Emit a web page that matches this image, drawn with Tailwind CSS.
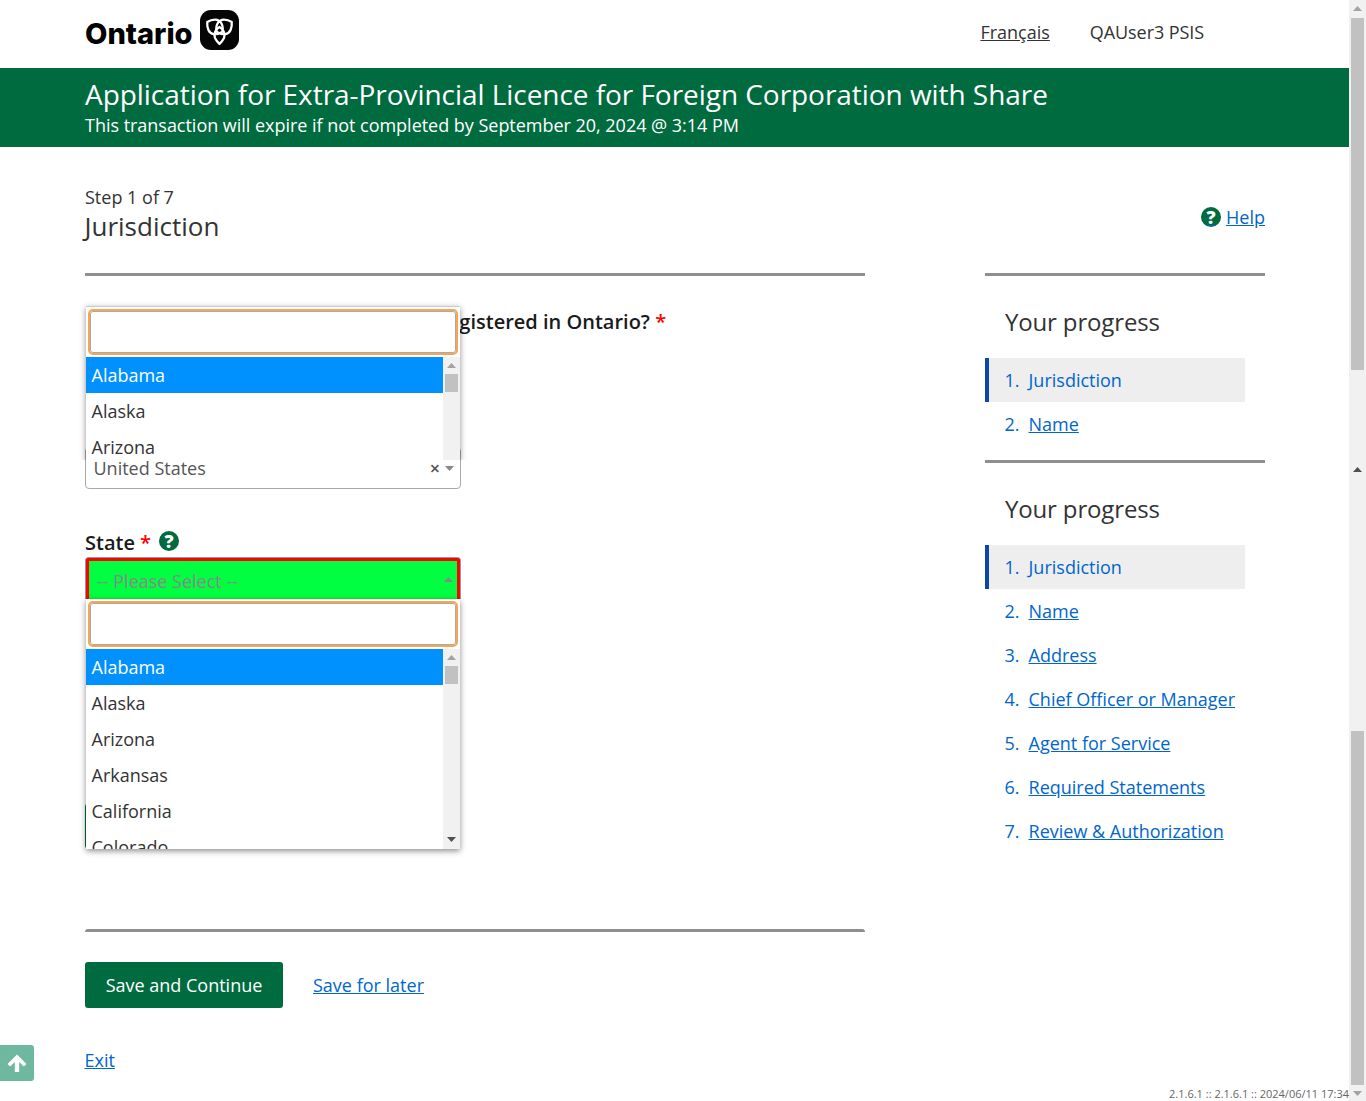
<!DOCTYPE html>
<html lang="en">
<head>
    <meta charset="UTF-8">
    <title>Application for Extra-Provincial Licence</title>
    <script src="https://cdn.jsdelivr.net/npm/@tailwindcss/browser@4"></script>
</head>
<body class="bg-white font-['Open_Sans',sans-serif] text-[18px] text-[#1a1a1a]">
<div class="flex h-[1101px] overflow-hidden relative">
    <div class="w-[1349px] shrink-0">
        <!-- Header -->
        <header class="h-[68px] flex items-center justify-between pl-[85px] pr-[145px]">
            <div class="flex items-center gap-[7px]">
                <span class="font-['Inter',sans-serif] font-extrabold text-[29px] text-black leading-none mt-[-1px]">Ontario</span>
                <svg class="w-[39px] h-[40px] mt-[-8px]" viewBox="0 0 39 40">
                    <rect width="39" height="40" rx="11" fill="#050505"/>
                    <g fill="none" stroke="#fff" stroke-width="2.3" stroke-linejoin="round">
                        <path transform="translate(20 20) rotate(-58)" d="M0 3C-7 0-9-6-6-10C-4-13-2-14 0-15C2-14 4-13 6-10C9-6 7 0 0 3Z"/>
                        <path transform="translate(19 20) rotate(58)" d="M0 3C-7 0-9-6-6-10C-4-13-2-14 0-15C2-14 4-13 6-10C9-6 7 0 0 3Z"/>
                        <path transform="translate(19.5 19) rotate(180)" d="M0 2C-4 0-6-5-4.5-9C-3-12-1-14 0-15C1-14 3-12 4.5-9C6-5 4 0 0 2Z"/>
                    </g>
                </svg>
            </div>
            <nav class="flex items-center gap-[40px] pb-[4px] text-[#333]">
                <a href="#" class="underline">Français</a>
                <span class="tracking-[-0.08px]">QAUser3 PSIS</span>
            </nav>
        </header>

        <!-- Title band -->
        <div class="h-[79px] bg-[#006b3f] text-white pl-[85px] pt-[8px]">
            <h1 class="text-[28px] leading-[36px] tracking-[-0.05px]">Application for Extra-Provincial Licence for Foreign Corporation with Share</h1>
            <p class="text-[18px] leading-[24px] mt-px tracking-[-0.025px]">This transaction will expire if not completed by September 20, 2024 @ 3:14 PM</p>
        </div>

        <main class="px-[85px]">
            <div class="flex justify-between items-center w-[1180px] pt-[38px]">
                <div>
                    <p class="leading-[24px] text-[#333]">Step 1 of 7</p>
                    <h2 class="text-[26px] leading-[34px] mb-[2px] ml-[-0.5px] text-[#333]">Jurisdiction</h2>
                </div>
                <a href="#" class="flex items-center gap-[5px] mt-[4px] text-[#0066cc] underline leading-[24px]">
                    <span class="inline-block w-[20px] h-[20px] rounded-full bg-[#006b3f] text-white text-[18px] font-extrabold leading-[20px] text-center">?</span>
                    Help
                </a>
            </div>

            <div class="flex justify-between w-[1180px] mt-[28px]">
                <!-- Form column -->
                <div class="w-[780px] relative">
                    <div class="h-[3px] bg-[#8f8f8f]"></div>
                    <label class="block mt-[32px] ml-[7px] text-[20px] leading-[28px] font-semibold text-[#1a1a1a] whitespace-nowrap">What jurisdiction is the corporation registered in Ontario? <span class="text-[#ff0000]">*</span></label>

                    <div class="mt-[111px] w-[376px] h-[42px] border border-[#aaa] rounded-[4px] bg-white flex items-center justify-between pl-[7.5px] pr-[5px] text-[#555]">
                        <span>United States</span>
                        <span class="flex items-center gap-[5px]">
                            <span class="text-[18px] font-semibold leading-none">×</span>
                            <svg class="w-[10px] h-[5px]" viewBox="0 0 10 5"><path d="M0 0h9L4.5 5z" fill="#888"/></svg>
                        </span>
                    </div>

                    <label class="flex items-center mt-[40px] text-[20px] leading-[28px] font-semibold">
                        State <span class="text-[#ff0000] ml-[5px]">*</span>
                        <span class="ml-[8px] mt-[-4px] w-[20px] h-[20px] rounded-full bg-[#006b3f] text-white text-[18px] font-extrabold leading-[20px] text-center">?</span>
                    </label>
                    <div class="w-[376px] h-[42px] border-x border-t border-[#999] rounded-t-[4px] overflow-hidden">
                        <div class="h-full border-x-[3px] border-t-[3px] border-[#ff0000] bg-[#00ff41] flex items-center justify-between pl-[8px] pr-[3px] text-[#888]">
                            <span class="mt-[3px]">-- Please Select --</span>
                            <svg class="w-[10px] h-[5px] mb-[2px]" viewBox="0 0 10 5"><path d="M0 5h9L4.5 0z" fill="#888"/></svg>
                        </div>
                    </div>

                    <!-- Underneath the open list -->
                    <div class="mt-[204px] h-[46px] w-[120px] bg-[#006b3f] rounded-l-[4px]"></div>
                    <div class="h-[3px] mt-[80px] bg-[#8f8f8f] rounded-t-[3px]"></div>

                    <div class="flex items-center gap-[30px] mt-[30px]">
                        <button class="w-[198px] h-[46px] bg-[#006b3f] text-white font-medium rounded-[3px]">Save and Continue</button>
                        <a href="#" class="text-[#0066cc] underline">Save for later</a>
                    </div>
                    <a href="#" class="block mt-[40px] leading-[24px] ml-[-0.5px] text-[#0066cc] underline">Exit</a>

                    <!-- Open list, jurisdiction -->
                    <div class="absolute left-px top-[33px] w-[374px] h-[154px] bg-white border-t border-[#ccc] shadow-[0_2px_6px_rgba(0,0,0,0.45)] [clip-path:inset(-10px_-10px_0_-10px)]">
                        <div class="mx-[2px] mt-[2px] h-[46px] rounded-[5px] border-2 border-[#f7a64f] bg-white">
                            <div class="h-full border border-[#aaa] rounded-[3px]"></div>
                        </div>
                        <div class="flex h-[103px] mt-[2px] overflow-hidden">
                            <ul class="flex-1 text-[#333]">
                                <li class="h-[36px] leading-[36px] pl-[5.5px] bg-[#0091ff] text-white">Alabama</li>
                                <li class="h-[36px] leading-[36px] pl-[5.5px]">Alaska</li>
                                <li class="h-[36px] leading-[36px] pl-[5.5px]">Arizona</li>
                            </ul>
                            <div class="w-[17px] bg-[#f1f1f1] px-[2px] pt-[6px]">
                                <svg class="w-[9px] h-[5px] mx-auto" viewBox="0 0 9 5"><path d="M0 5h9L4.5 0z" fill="#a3a3a3"/></svg>
                                <div class="h-[18px] mt-[6px] bg-[#c1c1c1]"></div>
                            </div>
                        </div>
                    </div>

                    <!-- Open list, state -->
                    <div class="absolute left-px top-[326px] w-[374px] h-[250px] bg-white shadow-[0_2px_6px_rgba(0,0,0,0.45)]">
                        <div class="mx-[2px] mt-[2px] h-[46px] rounded-[5px] border-2 border-[#f7a64f] bg-white">
                            <div class="h-full border border-[#aaa] rounded-[3px]"></div>
                        </div>
                        <div class="flex h-[200px] mt-[2px] overflow-hidden">
                            <ul class="flex-1 text-[#333]">
                                <li class="h-[36px] leading-[36px] pl-[5.5px] bg-[#0091ff] text-white">Alabama</li>
                                <li class="h-[36px] leading-[36px] pl-[5.5px]">Alaska</li>
                                <li class="h-[36px] leading-[36px] pl-[5.5px]">Arizona</li>
                                <li class="h-[36px] leading-[36px] pl-[5.5px]">Arkansas</li>
                                <li class="h-[36px] leading-[36px] pl-[5.5px]">California</li>
                                <li class="h-[36px] leading-[36px] pl-[5.5px]">Colorado</li>
                            </ul>
                            <div class="w-[17px] bg-[#f1f1f1] px-[2px] pt-[6px] relative">
                                <svg class="w-[9px] h-[5px] mx-auto" viewBox="0 0 9 5"><path d="M0 5h9L4.5 0z" fill="#a3a3a3"/></svg>
                                <div class="h-[18px] mt-[6px] bg-[#c1c1c1]"></div>
                                <svg class="absolute bottom-[7px] left-[4px] w-[9px] h-[5px]" viewBox="0 0 9 5"><path d="M0 0h9L4.5 5z" fill="#505050"/></svg>
                            </div>
                        </div>
                    </div>
                </div>

                <!-- Progress column -->
                <aside class="w-[280px]">
                    <div class="h-[3px] bg-[#8f8f8f]"></div>
                    <h3 class="text-[24px] leading-[34px] pl-[20px] mt-[29px] tracking-[-0.15px] text-[#333]">Your progress</h3>
                    <ol class="mt-[19px] mr-[20px] text-[#0066cc]">
                        <li class="h-[44px] flex items-center gap-[9px] pl-[15.5px] bg-[#eee] border-l-4 border-[#0b47a8]"><span>1.</span><span>Jurisdiction</span></li>
                        <li class="h-[44px] flex items-center gap-[9px] pl-[19.5px]"><span>2.</span><a href="#" class="underline">Name</a></li>
                    </ol>
                    <div class="h-[3px] mt-[14px] bg-[#8f8f8f]"></div>
                    <h3 class="text-[24px] leading-[34px] pl-[20px] mt-[29px] tracking-[-0.15px] text-[#333]">Your progress</h3>
                    <ol class="mt-[19px] mr-[20px] text-[#0066cc] whitespace-nowrap">
                        <li class="h-[44px] flex items-center gap-[9px] pl-[15.5px] bg-[#eee] border-l-4 border-[#0b47a8]"><span>1.</span><span>Jurisdiction</span></li>
                        <li class="h-[44px] flex items-center gap-[9px] pl-[19.5px]"><span>2.</span><a href="#" class="underline">Name</a></li>
                        <li class="h-[44px] flex items-center gap-[9px] pl-[19.5px]"><span>3.</span><a href="#" class="underline">Address</a></li>
                        <li class="h-[44px] flex items-center gap-[9px] pl-[19.5px]"><span>4.</span><a href="#" class="underline">Chief Officer or Manager</a></li>
                        <li class="h-[44px] flex items-center gap-[9px] pl-[19.5px]"><span>5.</span><a href="#" class="underline">Agent for Service</a></li>
                        <li class="h-[44px] flex items-center gap-[9px] pl-[19.5px]"><span>6.</span><a href="#" class="underline">Required Statements</a></li>
                        <li class="h-[44px] flex items-center gap-[9px] pl-[19.5px]"><span>7.</span><a href="#" class="underline">Review &amp; Authorization</a></li>
                    </ol>
                </aside>
            </div>
        </main>
    </div>

    <!-- Window scrollbar -->
    <div class="w-[17px] shrink-0 bg-[#f1f1f1] relative">
        <svg class="absolute left-[4px] top-[6px] w-[9px] h-[5px]" viewBox="0 0 9 5"><path d="M0 5h9L4.5 0z" fill="#a3a3a3"/></svg>
        <div class="absolute left-[2px] top-[18px] w-[13px] h-[352px] bg-[#c1c1c1]"></div>
        <svg class="absolute left-[4px] top-[467px] w-[9px] h-[5px]" viewBox="0 0 9 5"><path d="M0 5h9L4.5 0z" fill="#505050"/></svg>
        <div class="absolute left-[2px] top-[731px] w-[13px] h-[354px] bg-[#c1c1c1]"></div>
        <svg class="absolute left-[4px] top-[1091px] w-[9px] h-[5px]" viewBox="0 0 9 5"><path d="M0 0h9L4.5 5z" fill="#a3a3a3"/></svg>
    </div>

    <!-- Back to top -->
    <a href="#" class="absolute left-0 top-[1045px] w-[34px] h-[36px] bg-[#6db89f] rounded-r-[3px] flex items-center justify-center">
        <svg class="w-[20px] h-[20px]" viewBox="0 0 20 20"><path d="M10 1.5 19.5 11l-2.6 2.6-4.7-4.7V19H7.8V8.9l-4.7 4.7L.5 11z" fill="#fff"/></svg>
    </a>

    <span class="absolute right-[17px] bottom-0 text-[11px] leading-[14px] text-[#666]">2.1.6.1 :: 2.1.6.1 :: 2024/06/11 17:34</span>
</div>
</body>
</html>
